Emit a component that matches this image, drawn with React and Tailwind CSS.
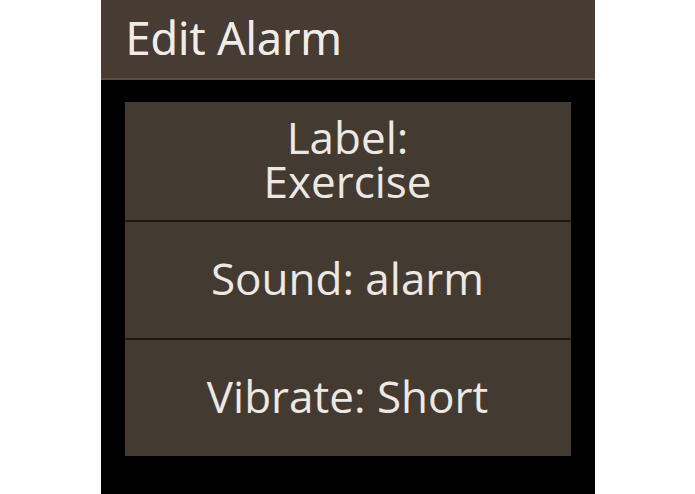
import React from 'react';

const rows = [
  { id: 'label', lines: ['Label:', 'Exercise'] },
  { id: 'sound', lines: ['Sound: alarm'] },
  { id: 'vibrate', lines: ['Vibrate: Short'] },
];

export default function App() {
  return (
    <div className="flex h-[494px] w-[695px] justify-center bg-white" style={{ fontFamily: '"Open Sans", "Noto Sans", sans-serif' }}>
      <div className="flex w-[494px] flex-col bg-black">
        {/* Title bar */}
        <div className="flex h-[80px] items-center border-b-2 border-[#5e4b3b] bg-[#463c33] pl-[25px] pb-[3px]">
          <span className="text-[45px] leading-none text-[#efebe6] [text-shadow:0_0_0.6px_#efebe6]">Edit Alarm</span>
        </div>

        {/* Settings list */}
        <div className="mx-[24px] mt-[22px] flex flex-col bg-[#433a31]">
          {rows.map((row, i) => (
            <div
              key={row.id}
              className={`flex h-[118px] flex-col items-center justify-center pb-[4px] text-center text-[44px] leading-[44px] text-[#ece9e4] ${
                i > 0 ? 'border-t-2 border-[#1e1813]' : ''
              }`}
            >
              {row.lines.map((line) => (
                <span key={line}>{line}</span>
              ))}
            </div>
          ))}
        </div>
      </div>
    </div>
  );
}
